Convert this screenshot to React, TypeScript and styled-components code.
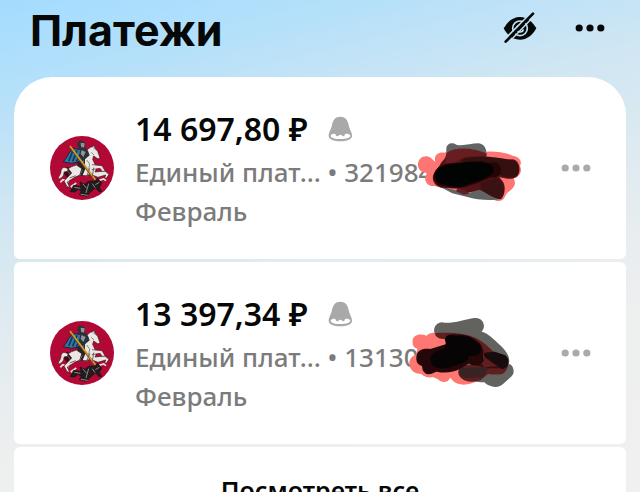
import React from "react";
import styled, { createGlobalStyle } from "styled-components";

const GlobalStyle = createGlobalStyle`
  *, *::before, *::after { box-sizing: border-box; }
  body { margin: 0; background: #f0f0f0; color: #060808; font-family: "Noto Sans", "Open Sans", sans-serif; }
  button { font: inherit; color: inherit; border: 0; padding: 0; background: none; cursor: pointer; }
  h1, h2, p { margin: 0; }
`;

const Page = styled.main`
  height: 100vh;
  overflow: hidden;
  padding: 0 14px;
  background: linear-gradient(166deg, #a3dcff 0%, #b4e0fa 14%, #cfe6f3 31%, #e2ebf0 52%, #eeefef 72%, #f0f0f0 100%);
`;

const Header = styled.header`
  display: flex;
  align-items: center;
  height: 77px;
  padding: 0 18px 18px 16px;
`;

const Title = styled.h1`
  flex: 1;
  font-family: Inter, "Noto Sans", sans-serif;
  font-size: 43px;
  line-height: 60px;
  font-weight: 700;
`;

const IconButton = styled.button<{ $color?: string }>`
  display: flex;
  align-items: center;
  justify-content: center;
  flex: none;
  width: 36px;
  height: 36px;
  color: ${(p) => p.$color ?? "#060808"};
`;

const Actions = styled.div`
  display: flex;
  gap: 34px;
  padding-bottom: 4px;
`;

const List = styled.div`
  display: flex;
  flex-direction: column;
  gap: 3px;
`;

const Card = styled.article<{ $first?: boolean }>`
  position: relative;
  display: flex;
  align-items: center;
  padding: 28px 32px 28px 36px;
  background: #fff;
  border-radius: ${(p) => (p.$first ? "38px 38px 6px 6px" : "6px")};
`;

const Details = styled.div`
  flex: 1;
  min-width: 0;
  margin-left: 21px;
`;

const AmountRow = styled.div`
  display: flex;
  align-items: center;
  gap: 20px;
  height: 48px;
`;

const Amount = styled.h2`
  font-size: 32px;
  line-height: 44px;
  font-weight: 600;
  white-space: nowrap;
`;

const Line = styled.p`
  font-size: 26px;
  line-height: 39px;
  font-weight: 500;
  color: #7b7b7b;
  white-space: nowrap;
`;

const Scribble = styled.svg<{ $top: number }>`
  position: absolute;
  left: 386px;
  top: ${(p) => p.$top}px;
  fill: none;
  stroke-linecap: round;
  stroke-linejoin: round;
`;

const ShowAll = styled.button`
  width: 100%;
  height: 86px;
  background: #fff;
  border-radius: 6px;
  font-size: 25px;
  line-height: 40px;
  font-weight: 600;
`;

const Dots = () => (
  <svg width="30" height="10" viewBox="0 0 30 10" fill="currentColor" aria-hidden="true">
    <circle cx="4.2" cy="5" r="3.6" />
    <circle cx="15" cy="5" r="3.6" />
    <circle cx="25.8" cy="5" r="3.6" />
  </svg>
);

const HiddenEye = () => (
  <svg width="36" height="32" viewBox="0 0 108 96" fill="none" aria-hidden="true">
    <path fill="currentColor" d="M5 49C18 27 34 15 54 15c20 0 36 12 49 34C90 72 74 83 54 83 34 83 17 72 5 49Z" />
    <circle cx="54" cy="49" r="22" stroke="#c1e3f6" strokeWidth="5" />
    <path d="M53 40a10 10 0 1 0 11 12" stroke="#c1e3f6" strokeWidth="5" />
    <path d="M7 83L89 1" stroke="#c1e3f6" strokeWidth="5" />
    <path d="M11 89L93 5" stroke="currentColor" strokeWidth="8" strokeLinecap="round" />
    <path d="M19 92L99 10" stroke="#c1e3f6" strokeWidth="4" />
  </svg>
);

const Bell = () => (
  <svg width="25" height="26" viewBox="0 0 75 78" aria-hidden="true">
    <path fill="#a9a9a9" d="M37 2C22 2 15 12 12 27C9 42 2 48 2 60C2 70 18 76 37 76S72 70 72 60C72 48 65 42 62 27C59 12 52 2 37 2Z" />
    <path fill="#fff" d="M8 59c3-5 8-7 14-5 2 6 6 9 9 5 3-4 9-4 12 0 3 4 7 1 8-5 7-2 13-1 16 5 0 6-13 10-29 10S8 66 8 59Z" />
  </svg>
);

const Emblem = () => (
  <svg width="64" height="64" viewBox="0 0 192 192" role="img" aria-label="Москва">
    <circle cx="96" cy="96" r="96" fill="#b10835" />
    <path d="M57 137l-19-6-7 8M147 133l14-4 7 5M79 141l-15 10 10 11" stroke="#e4dfdd" strokeWidth="5" fill="none" />
    <path fill="#3b0d16" d="M34 101l16-8 32 9-9 21-20 4-10-12Z" />
    <path fill="#ece7e5" stroke="#33181b" strokeWidth="2" d="M55 98c14-11 26-9 39-16l9-34 18-14 7-2 5-4 2 9 8 9 7 19-6 4-13-9-3 10 7 15c6 10 4 16 0 23l30-3 12 10-8 12-5-2 3-8-23 7-23-9-14 4-19-1-12 5-24 15 7 16-8-2-9-17 23-24-9-11Z" />
    <path fill="#ece7e5" stroke="#482428" strokeWidth="2" d="M126 86l30 3 9 15-7 3-8-10-25 4M53 98c-12-8-20-2-20 9-1 10-7 12-9 22 12-2 18-10 18-21l10-2" />
    <path fill="#3278a9" stroke="#172635" strokeWidth="3" d="M75 38c-13 4-19 13-24 25l-11 14 25 5 19-4 19 7 1-32-10-12Z" />
    <path d="M69 44L56 75M81 43L68 76M90 55l-11 22" stroke="#123951" strokeWidth="5" />
    <path fill="#2a3139" d="M84 31c-4-11 1-19 11-17l10 6-1 14 10 10 5 14-21 18-11-13 3-20Z" />
    <path fill="#8d9698" d="M92 20l12 2-2 13-9-3ZM95 42l12 6-7 15-8-10Z" />
    <path fill="#292125" d="M84 74l19 5 4 17-10 24-9-2 6-20-13-9Z" />
    <path d="M60 32L145 145" stroke="#6b4920" strokeWidth="7" />
    <path d="M60 30L146 144" stroke="#d6a52c" strokeWidth="4" />
    <path fill="#211c20" stroke="#111" strokeWidth="2" d="M65 158l6-10 23 4-4-14 15 7 10-9 19-1 9-8 12 14-7 13 7 13-9-1-9-11-18 15-9 11-22-5 6-9-9-8-10 9-14-1Z" />
    <path d="M73 154l18 3M98 143l12 14M116 143l-8 28M127 143l8 12M148 139l-12 7M92 175l21 3M110 72l9 12-3 17M124 49l8 8M137 41l-7-5" stroke="#8b8882" strokeWidth="3" fill="none" />
    <path d="M77 119l-18 7M119 97l-9 25M131 95l-4 27M53 104l8 12M97 102l-8 17" stroke="#6e6263" strokeWidth="3" />
  </svg>
);

const FirstScribble = () => (
  <Scribble $top={53} width="140" height="90" viewBox="0 0 420 270" aria-hidden="true">
    <path fill="#fe7673" d="M54 109C51 84 76 71 93 84L106 96C100 75 115 65 134 68C165 49 208 51 237 67C273 61 310 65 338 77C361 80 367 97 360 108C369 126 356 143 340 145C350 158 343 173 330 182C320 188 318 194 314 202C310 214 292 217 278 208L230 187L160 183L105 168C83 171 73 154 76 142L80 129C65 128 57 121 54 109Z" />
    <path fill="#616462" d="M139 58C139 40 157 36 169 44C190 49 211 40 236 40C254 41 264 62 257 83L241 100L139 94ZM117 169L206 190L251 170L303 207C272 213 229 209 202 201L157 190Z" />
    <path fill="#561315" d="M139 72C165 55 217 54 260 71L257 92L337 88C361 90 366 130 347 142C336 150 316 146 298 141L310 157C320 179 310 198 303 208C278 204 256 186 238 179L204 189L174 176L124 173C100 168 91 143 105 127L120 104C126 92 137 88 139 72Z" />
    <path fill="#681d20" d="M140 68C170 48 220 54 259 70L256 81L201 80C177 84 172 101 137 101Z" />
    <path fill="#351011" d="M190 86C239 73 295 83 340 91C358 98 362 128 348 139C328 148 302 137 283 127L196 111C181 104 181 92 190 86Z" />
    <path fill="#230507" d="M120 168C95 155 94 124 121 108C148 94 180 101 205 95L247 93L268 100C291 89 306 109 303 123C302 137 288 145 273 142L239 157L193 172C167 177 145 171 120 168Z" />
    <path fill="#020303" d="M119 160C99 145 103 122 123 112C145 99 174 102 206 95L256 99C283 99 288 125 271 136L240 151L188 168C163 173 139 165 119 160Z" />
    <path fill="#3a1214" d="M240 160L290 142L306 158C318 180 311 199 301 207C281 205 262 190 244 180Z" />
    <path fill="#612226" d="M173 174L199 182L207 191L191 194L168 184Z" />
  </Scribble>
);

const SecondScribble = () => (
  <Scribble $top={43} width="140" height="90" viewBox="0 0 420 270" aria-hidden="true">
    <path fill="#ff7772" d="M38 115C34 91 57 83 80 92C94 77 113 84 140 84C184 77 215 92 235 110L327 172C331 190 322 207 305 208L239 224C215 239 180 246 160 229L151 218C145 233 126 235 114 223L99 216C77 222 64 205 61 206C45 208 28 194 30 181C23 168 35 151 49 149L52 131C44 130 38 123 38 115Z" />
    <path stroke="#62625f" strokeWidth="48" d="M126 76C162 82 190 67 228 63" />
    <path fill="#62625f" d="M130 84L238 79C258 82 272 94 293 114C319 136 333 158 326 176C343 181 347 207 330 218L309 237C294 252 266 246 253 232C223 230 195 226 181 212C170 197 177 180 193 176L246 163L223 101Z" />
    <path fill="#601e1e" d="M107 84C151 82 201 83 237 104C256 115 268 129 281 140L315 151C329 160 328 190 313 203C302 211 284 209 264 207L241 226C216 234 194 230 182 218C168 202 177 188 193 180L225 181L220 150L150 130L134 102C114 103 102 91 107 84Z" />
    <path fill="#3b0d0f" d="M236 165L253 187L323 181C323 188 314 192 301 190L263 190L226 181Z" />
    <path fill="#250709" d="M49 162C48 134 69 129 91 132L142 116C126 93 147 84 170 89C202 85 243 109 247 128C254 142 245 153 251 164C247 181 223 185 207 175L184 190C157 206 127 204 109 200C85 212 75 209 68 195L66 183C55 180 49 173 49 162Z" />
    <path fill="#070405" d="M137 112C129 94 148 87 165 92L208 95L240 120C246 137 240 152 222 153L190 173L150 187C128 193 104 190 96 177C85 161 94 144 111 139L137 129Z" />
    <path fill="#160c0d" d="M254 143L284 140L315 151C333 163 326 186 307 192L275 172L263 162C253 159 250 149 254 143Z" />
    <path fill="#382322" d="M182 190L249 186L265 192L249 217L195 219C176 213 172 197 182 190Z" />
    <path fill="#260708" d="M205 154L239 149L251 166C245 182 217 188 205 173Z" />
  </Scribble>
);

interface Payment {
  amount: string;
  account: string;
  mark: React.ReactNode;
}

const payments: Payment[] = [
  { amount: "14 697,80 ₽", account: "321984", mark: <FirstScribble /> },
  { amount: "13 397,34 ₽", account: "13130", mark: <SecondScribble /> },
];

export default function App() {
  return (
    <Page>
      <GlobalStyle />
      <Header>
        <Title>Платежи</Title>
        <Actions>
          <IconButton aria-label="Скрыть суммы"><HiddenEye /></IconButton>
          <IconButton aria-label="Ещё"><Dots /></IconButton>
        </Actions>
      </Header>
      <List>
        {payments.map((payment, index) => (
          <Card key={payment.amount} $first={index === 0}>
            <Emblem />
            <Details>
              <AmountRow>
                <Amount>{payment.amount}</Amount>
                <Bell />
              </AmountRow>
              <Line>Единый плат... • {payment.account}</Line>
              <Line>Февраль</Line>
            </Details>
            {payment.mark}
            <IconButton $color="#aaaaaa" aria-label="Действия"><Dots /></IconButton>
          </Card>
        ))}
        <ShowAll>Посмотреть все</ShowAll>
      </List>
    </Page>
  );
}
